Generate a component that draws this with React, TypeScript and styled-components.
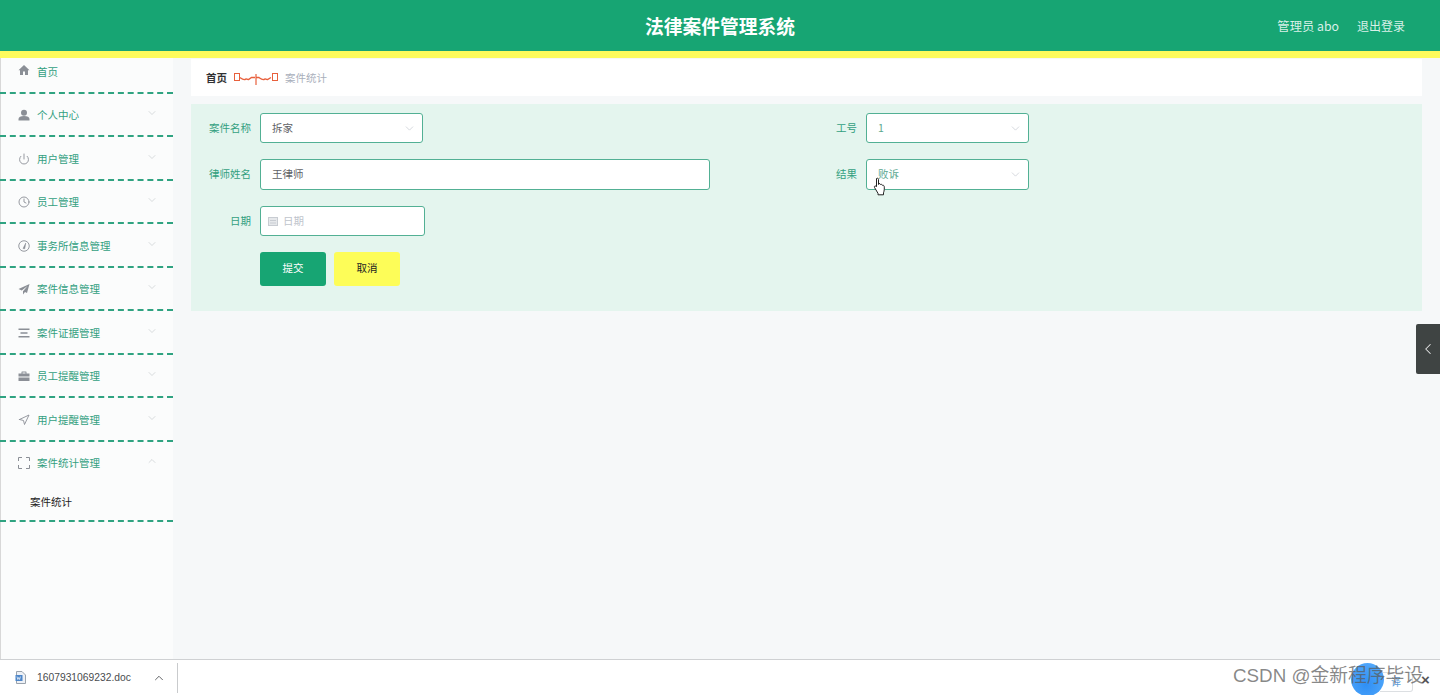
import React from "react";
import styled, { createGlobalStyle } from "styled-components";
import { ChevronDown, ChevronUp, ChevronLeft, Power, Clock, Navigation } from "lucide-react";

const Global = createGlobalStyle`
  html, body { margin: 0; padding: 0; height: 100%; overflow: hidden; }
  body { font-family: "Noto Sans CJK SC", "Noto Sans", sans-serif; }
  * { box-sizing: border-box; }
`;

const Page = styled.div`
  position: relative;
  display: flex;
  flex-direction: column;
  width: 1440px;
  height: 695px;
  overflow: hidden;
  background: #f6f8f9;
`;

const Header = styled.header`
  flex: none;
  height: 58px;
  display: flex;
  align-items: center;
  justify-content: space-between;
  position: relative;
  padding: 0 35px 0 0;
  background: #17a573;
  border-bottom: 7px solid #fdfb5c;
`;

const Title = styled.h1`
  margin: 0;
  position: absolute;
  left: 0;
  right: 0;
  top: 13px;
  text-align: center;
  color: #fff;
  font-size: 18.75px;
  line-height: 26px;
  font-weight: 700;
`;

const HeaderLinks = styled.div`
  margin-left: auto;
  display: flex;
  gap: 18px;
  color: #d9f0e8;
  font-size: 12px;
  line-height: 16px;
`;

const UserName = styled.span`
  font-size: 12.3px;
`;

const Body = styled.div`
  flex: 1;
  display: flex;
  min-height: 0;
`;

const Sidebar = styled.nav`
  flex: none;
  width: 173px;
  background: #fbfcfc;
  border-left: 1px solid #d8d8d8;
`;

const MenuGroup = styled.div`
  border-bottom: 2px dashed #2fa381;
  margin-left: -1px;
`;

const MenuRow = styled.div<{ $first?: boolean }>`
  height: ${(p) => (p.$first ? "33.5px" : "41.5px")};
  display: flex;
  align-items: ${(p) => (p.$first ? "flex-start" : "center")};
  padding: ${(p) => (p.$first ? "6px 15px 0 18px" : "2px 15px 0 18px")};
  gap: 7px;
  color: #33a07f;
  font-size: 10.5px;
  line-height: 16px;
  svg.lead { flex: none; width: 12px; height: 12px; color: #8b8f96; }
`;

const MenuLabel = styled.span`
  flex: 1;
  white-space: nowrap;
`;

const Caret = styled.span`
  flex: none;
  display: flex;
  margin-top: -4px;
  color: #bfc4c8;
`;

const SubItem = styled.div`
  height: 37px;
  padding: 1px 0 0 30px;
  color: #222;
  font-size: 10.5px;
  line-height: 36px;
`;

const Main = styled.main`
  flex: 1;
  padding: 1px 18px 0 18px;
  min-width: 0;
`;

const Crumbs = styled.div`
  height: 37px;
  display: flex;
  align-items: center;
  gap: 7px;
  padding: 0 0 0 15px;
  background: #fff;
  font-size: 10.5px;
`;

const CrumbHome = styled.span`
  color: #303133;
  font-weight: 700;
`;

const CrumbCurrent = styled.span`
  color: #a9afbb;
`;

const FormPanel = styled.section`
  margin-top: 8px;
  height: 207px;
  padding: 9px 0 0;
  background: #e4f5ee;
`;

const FormGrid = styled.div`
  display: grid;
  grid-template-columns: 606px 1fr;
  row-gap: 16px;
`;

const Field = styled.div<{ $wide?: boolean }>`
  display: flex;
  align-items: flex-start;
  gap: 9px;
  ${(p) => (p.$wide ? "grid-column: 1;" : "")}
`;

const FieldLabel = styled.label`
  flex: none;
  width: 60px;
  text-align: right;
  color: #33a07f;
  font-size: 10.5px;
  line-height: 30px;
`;

const Control = styled.div<{ $w: number; $h?: number; $pad?: number }>`
  position: relative;
  width: ${(p) => p.$w}px;
  height: ${(p) => p.$h ?? 30}px;
  display: flex;
  align-items: center;
  padding: 0 11px 0 ${(p) => p.$pad ?? 11}px;
  gap: 5px;
  background: #fff;
  border: 1px solid #52b094;
  border-radius: 3px;
  color: #606266;
  font-size: 10.5px;
`;

const Value = styled.span<{ $tone?: string }>`
  flex: 1;
  padding-bottom: 2px;
  color: ${(p) => p.$tone ?? "#606266"};
`;

const SelectCaret = styled.span`
  flex: none;
  display: flex;
  color: #c0c4cc;
  margin-right: -5px;
`;

const Buttons = styled.div`
  display: flex;
  gap: 8px;
  margin: 16px 0 0 69px;
`;

const Btn = styled.button<{ $bg: string; $fg: string }>`
  width: 66px;
  height: 34px;
  padding: 0 0 3px;
  border: 0;
  border-radius: 3px;
  background: ${(p) => p.$bg};
  color: ${(p) => p.$fg};
  font-family: inherit;
  font-size: 10.5px;
`;

const DownloadBar = styled.footer`
  flex: none;
  height: 36px;
  display: flex;
  align-items: center;
  background: #fff;
  border-top: 1px solid #cfd1d3;
`;

const DownloadItem = styled.div`
  width: 178px;
  height: 30px;
  display: flex;
  align-items: center;
  padding: 0 11px 0 15px;
  border-right: 1px solid #c9cbcd;
  color: #4a4d50;
  font-family: "Liberation Sans", sans-serif;
  font-size: 10.3px;
`;

const FileName = styled.span`
  flex: 1;
  margin-left: 11px;
`;

const SideToggle = styled.div`
  position: absolute;
  right: 0;
  top: 324px;
  width: 24px;
  height: 50px;
  display: flex;
  align-items: center;
  justify-content: center;
  background: #3f4443;
  border-radius: 2px 0 0 2px;
  color: #e8e8e8;
`;

const Pointer = styled.svg`
  position: absolute;
  left: 873px;
  top: 177px;
`;

const Bubble = styled.div`
  position: absolute;
  left: 1351px;
  top: 663px;
  width: 33px;
  height: 33px;
  border-radius: 50%;
  background: radial-gradient(circle at 45% 65%, #2f8ff5, #5aaefc);
`;

const Pill = styled.div`
  position: absolute;
  left: 1380px;
  top: 672px;
  width: 33px;
  height: 20px;
  border: 1px solid #dcdfe2;
  border-left: 0;
  border-radius: 0 3px 3px 0;
  background: #fff;
  color: #5b9bd8;
  font-size: 10px;
  line-height: 17px;
  text-align: center;
`;

const CloseMark = styled.span`
  position: absolute;
  left: 1421px;
  top: 670px;
  color: #555;
  font-family: "Liberation Sans", sans-serif;
  font-size: 15px;
  font-weight: 700;
  line-height: 20px;
`;

const Watermark = styled.div`
  position: absolute;
  left: 1233px;
  top: 662px;
  color: rgba(90, 90, 90, 0.72);
  font-family: "Liberation Sans", "Noto Sans CJK SC", sans-serif;
  font-size: 18.8px;
  line-height: 28px;
  white-space: nowrap;
`;

const HomeIcon = () => (
  <svg className="lead" viewBox="0 0 24 24" fill="currentColor"><path d="M12 2 1 12.500h3V22h6v-7h4v7h6v-9.500h3z" /></svg>
);
const UserIcon = () => (
  <svg className="lead" viewBox="0 0 24 24" fill="currentColor"><circle cx="12" cy="7.500" r="6" /><path d="M1 23v-3c0-4 4-6 11-6s11 2 11 6v3z" /></svg>
);
const DialIcon = () => (
  <svg className="lead" viewBox="0 0 24 24" fill="none" stroke="currentColor" strokeWidth="1.800">
    <circle cx="12" cy="12" r="10.500" />
    <path d="M10 17 15.500 6 13.500 17.500z" fill="currentColor" strokeWidth="1" />
  </svg>
);
const PlaneIcon = () => (
  <svg className="lead" viewBox="0 0 24 24" fill="currentColor"><path d="M23 2 1 12l6.500 3L19 6 10 16.500V23l4-5 4 2z" /></svg>
);
const LinesIcon = () => (
  <svg className="lead" viewBox="0 0 24 24" fill="none" stroke="currentColor" strokeWidth="2.600"><path d="M1 4.500h22M5 12h14M1 19.500h22" /></svg>
);
const CaseIcon = () => (
  <svg className="lead" viewBox="0 0 24 24" fill="currentColor"><path d="M8 3h8a1 1 0 0 1 1 1v3h6v6H1V7h6V4a1 1 0 0 1 1-1zm1 2v2h6V5zM1 15h22v7H1z" /></svg>
);
const CornersIcon = () => (
  <svg className="lead" viewBox="0 0 24 24" fill="none" stroke="currentColor" strokeWidth="2"><path d="M8 1H1v7M16 1h7v7M8 23H1v-7M16 23h7v-7" /></svg>
);

const items: { label: string; icon: React.ReactNode }[] = [
  { label: "个人中心", icon: <UserIcon /> },
  { label: "用户管理", icon: <Power className="lead" strokeWidth={1.8} /> },
  { label: "员工管理", icon: <Clock className="lead" strokeWidth={1.8} /> },
  { label: "事务所信息管理", icon: <DialIcon /> },
  { label: "案件信息管理", icon: <PlaneIcon /> },
  { label: "案件证据管理", icon: <LinesIcon /> },
  { label: "员工提醒管理", icon: <CaseIcon /> },
  { label: "用户提醒管理", icon: <Navigation className="lead" strokeWidth={1.8} /> },
];

const Arrow = () => (
  <SelectCaret><ChevronDown size={13} strokeWidth={1.2} /></SelectCaret>
);

export default function App() {
  return (
    <Page>
      <Global />
      <Header>
        <Title>法律案件管理系统</Title>
        <HeaderLinks>
          <UserName>管理员 abo</UserName>
          <span>退出登录</span>
        </HeaderLinks>
      </Header>
      <Body>
        <Sidebar>
          <MenuGroup>
            <MenuRow $first>
              <HomeIcon />
              <MenuLabel>首页</MenuLabel>
            </MenuRow>
          </MenuGroup>
          {items.map((m) => (
            <MenuGroup key={m.label}>
              <MenuRow>
                {m.icon}
                <MenuLabel>{m.label}</MenuLabel>
                <Caret><ChevronDown size={12} strokeWidth={1.2} /></Caret>
              </MenuRow>
            </MenuGroup>
          ))}
          <MenuGroup>
            <MenuRow>
              <CornersIcon />
              <MenuLabel>案件统计管理</MenuLabel>
              <Caret><ChevronUp size={12} strokeWidth={1.2} /></Caret>
            </MenuRow>
            <SubItem>案件统计</SubItem>
          </MenuGroup>
        </Sidebar>
        <Main>
          <Crumbs>
            <CrumbHome>首页</CrumbHome>
            <svg width="44" height="16" viewBox="0 0 44 16" fill="none" stroke="#e8603c">
              <rect x="0.500" y="3.500" width="5" height="7" />
              <path d="M6 7.500c2 1.500 3 2.500 5 2 1.500-1.500 2 .5 3.500 0l3-2h3.500" strokeWidth="1.400" />
              <path d="M22 4v11" strokeWidth="1.200" />
              <path d="M22 7.500h3c2 1.500 3 2.500 5 2 1.500-1.500 2 .5 3.500 0l3.500-2" strokeWidth="1.400" />
              <rect x="38.500" y="3.500" width="5" height="7" />
            </svg>
            <CrumbCurrent>案件统计</CrumbCurrent>
          </Crumbs>
          <FormPanel>
            <FormGrid>
              <Field>
                <FieldLabel>案件名称</FieldLabel>
                <Control $w={163}>
                  <Value>拆家</Value>
                  <Arrow />
                </Control>
              </Field>
              <Field>
                <FieldLabel>工号</FieldLabel>
                <Control $w={163}>
                  <Value $tone="#5aa78f">1</Value>
                  <Arrow />
                </Control>
              </Field>
              <Field>
                <FieldLabel>律师姓名</FieldLabel>
                <Control $w={450} $h={31}>
                  <Value>王律师</Value>
                </Control>
              </Field>
              <Field>
                <FieldLabel>结果</FieldLabel>
                <Control $w={163} $h={31}>
                  <Value $tone="#5aa78f">败诉</Value>
                  <Arrow />
                </Control>
              </Field>
              <Field $wide>
                <FieldLabel>日期</FieldLabel>
                <Control $w={165} $pad={7}>
                  <svg width="10" height="10" viewBox="0 0 10 10" fill="none" stroke="#c8ccd2">
                    <rect x="0.500" y="1.500" width="9" height="8" fill="#e6e8eb" />
                    <path d="M2 4.500h6M2 7h6" />
                  </svg>
                  <Value $tone="#c0c4cc">日期</Value>
                </Control>
              </Field>
            </FormGrid>
            <Buttons>
              <Btn $bg="#17a573" $fg="#fff">提交</Btn>
              <Btn $bg="#fdfd58" $fg="#222">取消</Btn>
            </Buttons>
          </FormPanel>
        </Main>
      </Body>
      <DownloadBar>
        <DownloadItem>
          <svg width="11" height="13" viewBox="0 0 11 13" fill="none">
            <path d="M1.500.500h5.500l3.500 3.500v8.500h-9z" fill="#eef1f6" stroke="#9aa3ad" />
            <rect x="0.500" y="4" width="7" height="6" fill="#4d86c9" />
            <path d="M2 5.500l.8 3 .9-2 .9 2 .8-3" stroke="#fff" strokeWidth=".7" />
          </svg>
          <FileName>1607931069232.doc</FileName>
          <ChevronUp size={14} strokeWidth={1.6} color="#5a5d60" />
        </DownloadItem>
      </DownloadBar>
      <SideToggle><ChevronLeft size={18} strokeWidth={1.4} /></SideToggle>
      <Pointer width="14" height="19" viewBox="0 0 14 19">
        <path d="M3.500 1.500c1-.8 2 0 2 1v5l.3-1c1 0 1.500.2 1.700 1 .8-.4 1.600 0 1.800.8.800-.3 1.700.1 1.900 1 .3 2 .1 4.500-.7 6.500v2H5v-1.500L1.500 10.500c-.6-1 .4-2 1.500-1.300l.5.500z" fill="#fff" stroke="#222" strokeWidth="1" strokeLinejoin="round" />
      </Pointer>
      <Pill>译</Pill>
      <Bubble />
      <CloseMark>×</CloseMark>
      <Watermark>CSDN @金新程序毕设</Watermark>
    </Page>
  );
}
